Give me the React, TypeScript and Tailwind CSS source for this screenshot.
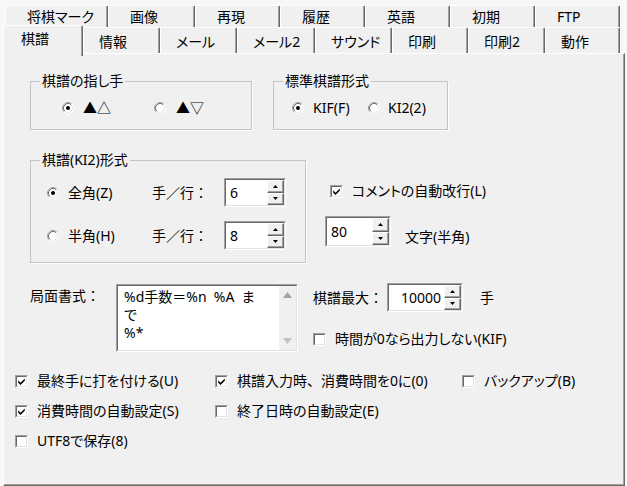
import React from "react";

const sunkenOuter =
  "border border-t-[#a0a0a0] border-l-[#a0a0a0] border-r-white border-b-white";
const sunkenInner =
  "border border-t-[#696969] border-l-[#696969] border-r-[#e3e3e3] border-b-[#e3e3e3]";

function Radio({ checked }: { checked?: boolean }) {
  return (
    <svg width="12" height="12" viewBox="0 0 12 12" className="shrink-0">
      <circle cx="6" cy="6" r="5.5" fill="#fff" />
      <path d="M2.11 9.89 A5.5 5.5 0 0 1 9.89 2.11" fill="none" stroke="#a0a0a0" />
      <path d="M2.82 9.18 A4.5 4.5 0 0 1 9.18 2.82" fill="none" stroke="#696969" />
      <path d="M9.89 2.11 A5.5 5.5 0 0 1 2.11 9.89" fill="none" stroke="#ffffff" />
      <path d="M9.18 2.82 A4.5 4.5 0 0 1 2.82 9.18" fill="none" stroke="#e3e3e3" />
      {checked && <circle cx="6" cy="6" r="2" fill="#000" />}
    </svg>
  );
}

function Check({ checked }: { checked?: boolean }) {
  return (
    <div className={`w-[13px] h-[13px] shrink-0 ${sunkenOuter}`}>
      <div className={`w-full h-full bg-white flex items-center justify-center ${sunkenInner}`}>
        {checked && (
          <svg width="7" height="7" viewBox="0 0 7 7.5">
            <polygon points="0,2.5 2.5,5 7,0.5 7,3 2.5,7.5 0,5" fill="#000" />
          </svg>
        )}
      </div>
    </div>
  );
}

function SpinButton({ up }: { up?: boolean }) {
  return (
    <div className="flex-1 bg-[#f0f0f0] border border-t-white border-l-white border-r-[#696969] border-b-[#696969] shadow-[inset_-1px_-1px_0_#a0a0a0] flex items-center justify-center">
      <svg width="5" height="3" viewBox="0 0 5 3">
        {up ? (
          <polygon points="2.5,0 5,3 0,3" fill="#000" />
        ) : (
          <polygon points="0,0 5,0 2.5,3" fill="#000" />
        )}
      </svg>
    </div>
  );
}

function Spin({
  value,
  className,
  right,
}: {
  value: string;
  className: string;
  right?: boolean;
}) {
  return (
    <div className={`shrink-0 ${sunkenOuter} ${className}`}>
      <div className={`flex w-full h-full bg-white ${sunkenInner}`}>
        <div
          className={`flex-1 flex items-center ${right ? "justify-end pr-[3px]" : "pl-[4px]"}`}
        >
          {value}
        </div>
        <div className="w-[17px] flex flex-col">
          <SpinButton up />
          <SpinButton />
        </div>
      </div>
    </div>
  );
}

function CheckItem({
  checked,
  children,
}: {
  checked?: boolean;
  children: React.ReactNode;
}) {
  return (
    <div className="flex items-center gap-[9px] h-[20px]">
      <Check checked={checked} />
      <span>{children}</span>
    </div>
  );
}

function Colon() {
  return <span className="[font-feature-settings:normal]">：</span>;
}

function Tab1({ label, className }: { label: string; className: string }) {
  return (
    <div
      className={`h-[22px] bg-[#f0f0f0] border-l border-t border-r border-l-white border-t-white border-r-[#696969] shadow-[inset_-1px_0_0_#a0a0a0] rounded-tr-[2px] pl-[21px] pt-[2px] leading-[18px] ${className}`}
    >
      {label}
    </div>
  );
}

function Tab2({ label, className }: { label: string; className: string }) {
  return (
    <div
      className={`h-[26px] bg-[#f0f0f0] border-l border-t border-r border-l-white border-t-white border-r-[#696969] shadow-[inset_-1px_0_0_#a0a0a0] rounded-tr-[2px] pl-[15px] pt-[5px] leading-[18px] ${className}`}
    >
      {label}
    </div>
  );
}

const groupBox =
  "border border-[#c4c4c4] shadow-[1px_1px_0_#ffffff] p-0 m-0";

export default function App() {
  return (
    <div className="w-[627px] h-[486px] bg-[#f7f7f7] pt-[5px] overflow-hidden text-[14px] leading-[18px] text-black font-['Noto_Sans','Noto_Sans_CJK_JP',sans-serif] [font-feature-settings:'palt']">
      {/* tab row 1 */}
      <div className="flex pl-[5px] h-[22px]">
        <Tab1 label="将棋マーク" className="w-[103px]" />
        <Tab1 label="画像" className="w-[87px]" />
        <Tab1 label="再現" className="w-[85px]" />
        <Tab1 label="履歴" className="w-[85px]" />
        <Tab1 label="英語" className="w-[85px]" />
        <Tab1 label="初期" className="w-[85px]" />
        <Tab1 label="FTP" className="w-[85px]" />
      </div>
      {/* tab row 2 */}
      <div className="flex pl-[3px] h-[26px] items-start">
        <div className="relative z-10 -mt-[2px] w-[80px] h-[31px] bg-[#f0f0f0] border-l border-t border-r border-l-white border-t-white border-r-[#696969] shadow-[inset_-1px_0_0_#a0a0a0] rounded-tr-[2px] pl-[17px] pt-[4px] leading-[18px]">
          棋譜
        </div>
        <Tab2 label="情報" className="w-[77px]" />
        <Tab2 label="メール" className="w-[77px]" />
        <Tab2 label="メール2" className="w-[78px]" />
        <Tab2 label="サウンド" className="w-[77px]" />
        <Tab2 label="印刷" className="w-[76px]" />
        <Tab2 label="印刷2" className="w-[77px]" />
        <Tab2 label="動作" className="w-[75px]" />
      </div>
      {/* panel */}
      <div className="ml-[3px] w-[622px] h-[433px] bg-[#f0f0f0] border border-l-white border-t-white border-r-[#696969] border-b-[#696969] shadow-[inset_-1px_-1px_0_#a0a0a0] pt-[18px] flex flex-col">
        {/* row A */}
        <div className="flex pl-[26px]">
          <fieldset className={`w-[222px] h-[58px] ${groupBox}`}>
            <legend className="ml-[9px] px-[2px] leading-[18px]">棋譜の指し手</legend>
            <div className="mt-[8px] h-[20px] flex items-center pl-[31px]">
              <div className="w-[92px] flex items-center gap-[9px]">
                <Radio checked />
                <span>▲△</span>
              </div>
              <div className="flex items-center gap-[10px]">
                <Radio />
                <span>▲▽</span>
              </div>
            </div>
          </fieldset>
          <fieldset className={`ml-[21px] w-[175px] h-[58px] ${groupBox}`}>
            <legend className="ml-[9px] px-[2px] leading-[18px]">標準棋譜形式</legend>
            <div className="mt-[8px] h-[20px] flex items-center pl-[18px]">
              <div className="w-[76px] flex items-center gap-[9px]">
                <Radio checked />
                <span>KIF(F)</span>
              </div>
              <div className="flex items-center gap-[8px]">
                <Radio />
                <span>KI2(2)</span>
              </div>
            </div>
          </fieldset>
        </div>
        {/* row B */}
        <div className="flex pl-[26px] mt-[21px]">
          <fieldset className={`w-[276px] h-[112px] ${groupBox}`}>
            <legend className="ml-[9px] px-[2px] leading-[18px]">棋譜(KI2)形式</legend>
            <div className="mt-[9px] h-[29px] flex items-center pl-[16px]">
              <div className="w-[105px] flex items-center gap-[9px]">
                <Radio checked />
                <span>全角(Z)</span>
              </div>
              <span className="w-[72px]">
                手／行<Colon />
              </span>
              <Spin value="6" className="w-[62px] h-[29px]" />
            </div>
            <div className="mt-[14px] h-[29px] flex items-center pl-[16px]">
              <div className="w-[105px] flex items-center gap-[9px]">
                <Radio />
                <span>半角(H)</span>
              </div>
              <span className="w-[72px]">
                手／行<Colon />
              </span>
              <Spin value="8" className="w-[62px] h-[29px]" />
            </div>
          </fieldset>
          <div className="ml-[19px] flex flex-col">
            <div className="mt-[30px] pl-[5px]">
              <CheckItem checked>コメントの自動改行(L)</CheckItem>
            </div>
            <div className="mt-[15px] flex items-start">
              <Spin value="80" className="w-[66px] h-[31px]" />
              <span className="ml-[14px] mt-[12px]">文字(半角)</span>
            </div>
          </div>
        </div>
        {/* row C */}
        <div className="flex items-start mt-[20px] pl-[26px]">
          <span className="w-[86px] mt-[4px]">
            局面書式<Colon />
          </span>
          <div className={`w-[182px] h-[68px] mt-[1px] ${sunkenOuter}`}>
            <div className={`flex w-full h-full bg-white ${sunkenInner}`}>
              <div className="flex-1 pl-[6px] pt-[2px] leading-[18px]">
                <div>%d手数＝%n&nbsp;&nbsp;%A&nbsp;&nbsp;ま</div>
                <div>で</div>
                <div>%*</div>
              </div>
              <div className="w-[17px] bg-[#f0f0f0] flex flex-col items-center justify-between py-[6px]">
                <svg width="9" height="6" viewBox="0 0 9 6">
                  <polygon points="4.5,0 9,6 0,6" fill="#a3a3a3" />
                </svg>
                <svg width="9" height="6" viewBox="0 0 9 6">
                  <polygon points="0,0 9,0 4.5,6" fill="#c2c2c2" />
                </svg>
              </div>
            </div>
          </div>
          <div className="ml-[14px] flex flex-col">
            <div className="flex items-center h-[29px]">
              <span className="w-[75px] pl-[1px]">
                棋譜最大<Colon />
              </span>
              <Spin value="10000" right className="w-[76px] h-[29px]" />
              <span className="ml-[17px]">手</span>
            </div>
            <div className="mt-[17px] pl-[1px]">
              <CheckItem>時間が0なら出力しない(KIF)</CheckItem>
            </div>
          </div>
        </div>
        {/* row D */}
        <div className="mt-[19px] pl-[11px] flex flex-col gap-[10px]">
          <div className="flex">
            <div className="w-[200px]">
              <CheckItem checked>最終手に打を付ける(U)</CheckItem>
            </div>
            <div className="w-[247px]">
              <CheckItem checked>
                棋譜入力時<span className="[font-feature-settings:normal]">、</span>消費時間を0に(0)
              </CheckItem>
            </div>
            <CheckItem>バックアップ(B)</CheckItem>
          </div>
          <div className="flex">
            <div className="w-[200px]">
              <CheckItem checked>消費時間の自動設定(S)</CheckItem>
            </div>
            <CheckItem>終了日時の自動設定(E)</CheckItem>
          </div>
          <div className="flex">
            <CheckItem>UTF8で保存(8)</CheckItem>
          </div>
        </div>
      </div>
    </div>
  );
}
